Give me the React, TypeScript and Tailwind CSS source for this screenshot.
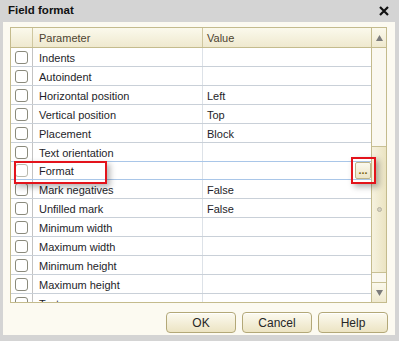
import React from "react";

// Field format dialog: parameter / value grid with a scrollbar and buttons

const rows: { name: string; value?: string; current?: boolean }[] = [
  { name: "Indents" },
  { name: "Autoindent" },
  { name: "Horizontal position", value: "Left" },
  { name: "Vertical position", value: "Top" },
  { name: "Placement", value: "Block" },
  { name: "Text orientation" },
  { name: "Format", current: true },
  { name: "Mark negatives", value: "False" },
  { name: "Unfilled mark", value: "False" },
  { name: "Minimum width" },
  { name: "Maximum width" },
  { name: "Minimum height" },
  { name: "Maximum height" },
  { name: "Text" },
];

function Checkbox({ faded }: { faded?: boolean }) {
  return (
    <div
      className={
        "w-[13px] h-[13px] rounded-[3px] border bg-white " +
        (faded ? "border-[#b9b9ad]" : "border-[#8a8a7c]")
      }
    />
  );
}

function Row({ name, value, current }: { name: string; value?: string; current?: boolean }) {
  return (
    <div
      className={
        "relative flex h-[19px] shrink-0 border-b " +
        (current ? "border-[#a9c6e8] border-t -mt-px" : "border-[#c9d0d8]")
      }
    >
      <div className="w-[22px] shrink-0 flex items-center justify-center border-r border-[#c3c3c3]">
        <Checkbox faded={current} />
      </div>
      <div className="w-[170px] shrink-0 flex items-center pl-[6px] pt-[2px] border-r border-[#dde2e8] text-[#1e1e2a]">
        {name}
      </div>
      <div className="flex-1 flex items-center pl-[4px] pt-[2px] text-[#1e1e2a]">{value}</div>
      {current && (
        <div className="absolute right-0 top-0 bottom-0 w-[16px] flex items-end justify-center pb-[3px] bg-gradient-to-b from-[#fbf9ee] to-[#ece5c6] border border-[#bdb387] rounded-[2px] text-[#7a6410] text-[11px] leading-[9px] font-bold">
          ...
        </div>
      )}
    </div>
  );
}

function Scrollbar() {
  return (
    <div className="w-[15px] shrink-0 flex flex-col border-l border-[#c4bb8d] bg-[#faf8f0]">
      <div className="h-[20px] shrink-0 flex items-center justify-center border-b border-[#c4bb8d] bg-gradient-to-b from-[#fbf9ec] to-[#efe9cf]">
        <svg width="7" height="6" viewBox="0 0 7 6">
          <path d="M3.5 0 L7 6 L0 6 Z" fill="#7b7b7b" />
        </svg>
      </div>
      <div className="h-[98px] shrink-0" />
      <div className="h-[127px] shrink-0 flex items-center justify-center border-t border-b border-[#c8c094] bg-gradient-to-r from-[#f6f2df] to-[#ebe4c2]">
        <div className="w-[5px] h-[5px] rounded-full bg-[#d4d0c0] border border-[#b7b2a0]" />
      </div>
      <div className="h-[10px] shrink-0 border-b border-[#c8c094]" />
      <div className="flex-1 flex items-center justify-center bg-gradient-to-b from-[#fbf9ec] to-[#efe9cf]">
        <svg width="7" height="6" viewBox="0 0 7 6">
          <path d="M0 0 L7 0 L3.5 6 Z" fill="#7b7b7b" />
        </svg>
      </div>
    </div>
  );
}

function Button({ label }: { label: string }) {
  return (
    <button className="w-[70px] h-[21px] rounded-[4px] border border-[#b3a878] bg-gradient-to-b from-[#fcfaf0] to-[#ece4c3] text-[12px] text-[#262626] shadow-[inset_0_1px_0_#ffffff]">
      {label}
    </button>
  );
}

export default function App() {
  return (
    <div className="w-[399px] h-[341px] flex flex-col bg-[#d4d4d4] font-['Liberation_Sans',Arial,sans-serif] text-[11px] overflow-hidden">
      {/* title bar */}
      <div className="h-[22px] shrink-0 flex items-center justify-between pl-[8px] pr-[10px]">
        <span className="font-bold text-[11.5px] text-[#111]">Field format</span>
        <svg width="10" height="10" viewBox="0 0 10 10">
          <path d="M1 1 L9 9 M9 1 L1 9" stroke="#111" strokeWidth="2.2" />
        </svg>
      </div>

      {/* body */}
      <div className="relative flex-1 flex flex-col ml-[3px] mr-[4px] mb-[6px] bg-[#fcfaf1] pt-[5px] pl-[7px] pr-[8px] pb-[2px]">
        <div className="h-[276px] shrink-0 flex border border-[#c4bb8d] bg-white overflow-hidden">
          <div className="flex-1 flex flex-col overflow-hidden">
            {/* header */}
            <div className="h-[20px] shrink-0 flex border-b border-[#c4bb8d] bg-gradient-to-b from-[#fbf9ec] to-[#efe9cf] text-[#4d4330]">
              <div className="w-[22px] shrink-0 border-r border-[#cfc7a0]" />
              <div className="w-[170px] shrink-0 flex items-center pl-[6px] pt-[1px] border-r border-[#cfc7a0]">Parameter</div>
              <div className="flex-1 flex items-center pl-[4px] pt-[1px]">Value</div>
            </div>
            {rows.map((r) => (
              <Row key={r.name} {...r} />
            ))}
          </div>
          <Scrollbar />
        </div>

        <div className="mt-[9px] -mr-[1px] flex justify-end gap-[6px]">
          <Button label="OK" />
          <Button label="Cancel" />
          <Button label="Help" />
        </div>

        {/* red annotation boxes */}
        <div className="absolute left-[11px] top-[139px] w-[93px] h-[23px] border-2 border-[#e3131b] shadow-[3px_3px_6px_rgba(0,0,0,0.3)]" />
        <div className="absolute left-[348px] top-[135px] w-[25px] h-[27px] border-2 border-[#e3131b] shadow-[3px_3px_6px_rgba(0,0,0,0.3)]" />
      </div>
    </div>
  );
}
